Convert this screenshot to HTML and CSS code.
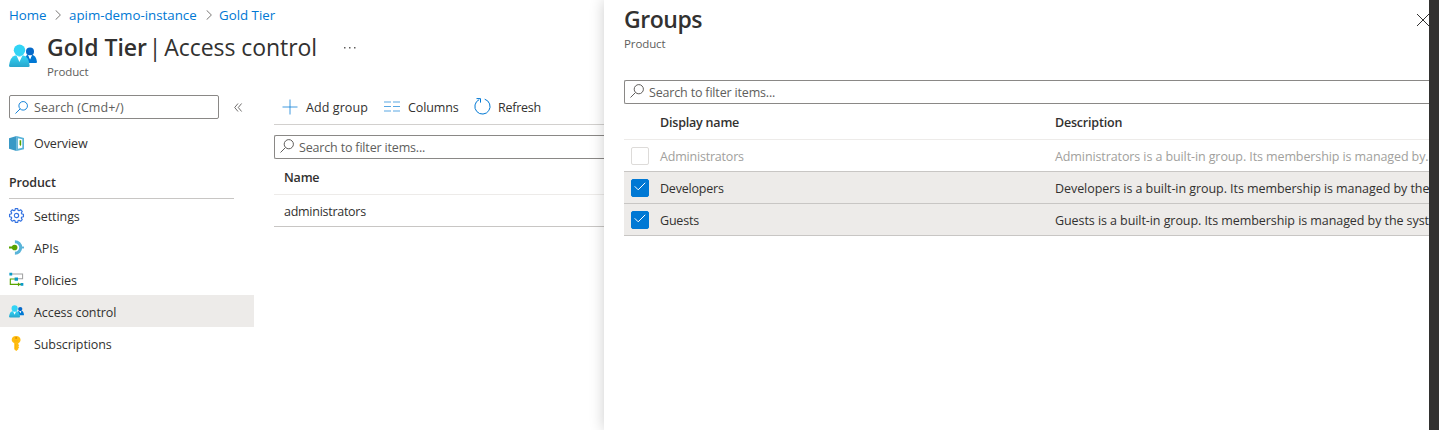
FILE: index.html
```html
<!DOCTYPE html>
<html lang="en">
<head>
<meta charset="utf-8">
<title>Gold Tier | Access control</title>
<link rel="stylesheet" href="styles.css">
</head>
<body>
<svg class="defs" width="0" height="0" aria-hidden="true">
  <defs>
    <linearGradient id="cyan" x1="0" y1="0" x2="0" y2="1"><stop offset="0" stop-color="#32d4f5"/><stop offset="1" stop-color="#28a5cc"/></linearGradient>
    <symbol id="people" viewBox="0 0 28 24">
      <circle cx="21" cy="7.400" r="4" fill="#0669c9"/>
      <path d="M16 19V15q.5-3.800 3-4.200l2 4 2-4q4 .5 5 7.200 0 1-1 1z" fill="#0078d4"/>
      <path d="M19.200 11l1.900 4.400L23 11q-2 1-3.800 0z" fill="#fff"/>
      <path d="M6 11.500q-4.500 1-6 10Q0 23 1.400 23H19.400q1.300 0 1.200-1.500-1-9-6-10z" fill="url(#cyan)"/>
      <path d="M7.500 11.500L10.400 18 13.500 11.500q-3 2-6 0z" fill="#fff"/>
      <circle cx="10.500" cy="6.200" r="5.700" fill="#32d4f5"/>
    </symbol>
    <symbol id="lens" viewBox="0 0 14 14"><circle cx="8.800" cy="5.200" r="4.600"/><path d="M5.500 8.500L.5 13.500"/></symbol>
    <symbol id="chev" viewBox="0 0 6 10"><path d="M.6.300L5.400 5 .6 9.700"/></symbol>
    <symbol id="tick" viewBox="0 0 12 9"><path d="M.7 4.300L4.200 7.800 11.200.8"/></symbol>
  </defs>
</svg>
<div class="portal">
  <div class="blade">
    <nav class="crumbs">
      <a class="home">Home</a><svg class="chev"><use href="#chev"/></svg><a class="instance">apim-demo-instance</a><svg class="chev"><use href="#chev"/></svg><a class="tier">Gold Tier</a>
    </nav>
    <header class="head">
      <svg class="head-icon"><use href="#people"/></svg>
      <div class="head-text">
        <h1><b>Gold Tier</b><i>|</i><span>Access control</span></h1>
        <div class="kind">Product</div>
      </div>
      <svg class="more" viewBox="0 0 12 2"><path d="M0 0h1.500v1.500H0zM5 0h1.500v1.500H5zM10 0h1.500v1.500H10z"/></svg>
    </header>
    <div class="body">
      <aside class="menu">
        <div class="search-row">
          <div class="search"><svg class="lens"><use href="#lens"/></svg><span class="s-menu">Search (Cmd+/)</span></div>
          <svg class="collapse" viewBox="0 0 8 9"><path d="M4 .5L.7 4.500 4 8.500M7.600.5L4.300 4.500l3.300 4"/></svg>
        </div>
        <div class="item overview">
          <svg viewBox="0 0 16 16"><path d="M8 0l8 2v12l-8 2z" fill="#59b4d9"/><path d="M9.500 2.500l4.700 1v9l-4.700 1z" fill="#fff"/><path d="M11.300 4.500H13v4.500l-.8 2-.9-2z" fill="#57a300"/><path d="M0 2.500L8 0v16l-8-2.500z" fill="#3999c6"/></svg>
          <span>Overview</span>
        </div>
        <h2>Product</h2>
        <div class="item">
          <svg viewBox="0 0 16 16" fill="none" stroke="#3573e2"><circle cx="8" cy="8" r="2.300" stroke-width="1.200"/><path stroke-width="1.250" stroke-linejoin="round" d="M6.700.6h2.600l.4 1.900 1 .4 1.700-1 1.700 1.700-1 1.700.4 1 1.900.4v2.600l-1.900.4-.4 1 1 1.700-1.700 1.700-1.700-1-1 .4-.4 1.900H6.700l-.4-1.900-1-.4-1.700 1-1.700-1.700 1-1.700-.4-1L.6 9.300V6.700l1.900-.4.4-1-1-1.700 1.700-1.700 1.700 1 1-.4z"/></svg>
          <span class="t-settings">Settings</span>
        </div>
        <div class="item">
          <svg viewBox="0 0 16 16"><path d="M6.300 1.800a6.200 6.200 0 0 1 0 12.400" stroke="#59b4d9" stroke-width="3.200" fill="none"/><path d="M13 7h3v2h-3z" fill="#59b4d9"/><path d="M0 6.900h4v2.200H0z" fill="#57a300"/><circle cx="6" cy="8" r="3" fill="#57a300"/></svg>
          <span>APIs</span>
        </div>
        <div class="item">
          <svg viewBox="0 0 16 16" fill="none"><path d="M2 2.200h12.500v5H8" stroke="#a0a1a2" stroke-width="1.100"/><path d="M8 7.500H1.400v5.700H13" stroke="#57a300" stroke-width="1.200"/><path d="M9.500 11l2.500 2.200-2.500 2.200z" fill="#57a300"/><path d="M.4.700h3v3h-3zM6 5.800h3.600v3.600H6zM12.300 11.700h3v3h-3z" fill="#0a9bc7"/></svg>
          <span>Policies</span>
        </div>
        <div class="item selected">
          <svg><use href="#people"/></svg>
          <span class="t-access">Access control</span>
        </div>
        <div class="item">
          <svg viewBox="0 0 16 16"><path d="M7.500 0c2.900 0 4.800 1.600 4.800 4.100 0 1.800-.9 3-2.400 3.700v1l1 1-1 1.100 1 1.100-1 1.100v1l-2.200 1.900-2.100-1.900V7.800C4 7 2.900 5.900 2.900 4.100 2.900 1.600 4.700 0 7.500 0z" fill="#ffbd10"/><circle cx="7.600" cy="2" r="1" fill="#d98a00"/><path d="M5.500 5.200h4.200M7 8.500v5" stroke="#f0a800" stroke-width=".5"/></svg>
          <span class="t-subs">Subscriptions</span>
        </div>
      </aside>
      <main class="content">
        <div class="toolbar">
          <svg class="i-add" viewBox="0 0 16 16"><path d="M8 .5v15M.5 8h15"/></svg><span class="t-add">Add group</span>
          <svg class="i-cols" viewBox="0 0 16 11"><path d="M0 1h7M9 1h7M0 5.500h7M9 5.500h7M0 10h7M9 10h7"/></svg><span class="t-cols">Columns</span>
          <svg class="i-ref" viewBox="0 0 17 17"><path d="M10.700 1.200A7.600 7.600 0 1 1 5.200 1.600M2.500.6h4v4"/></svg><span class="t-ref">Refresh</span>
        </div>
        <div class="filter"><svg class="lens"><use href="#lens"/></svg><span class="s-filter">Search to filter items...</span></div>
        <div class="col-head">Name</div>
        <div class="row"><span class="t-admins">administrators</span></div>
      </main>
    </div>
  </div>
  <section class="panel">
    <header class="panel-head">
      <div><h1>Groups</h1><div class="kind">Product</div></div>
      <svg class="close" viewBox="0 0 12 12"><path d="M0 0l12 12M12 0L0 12"/></svg>
    </header>
    <div class="filter"><svg class="lens"><use href="#lens"/></svg><span class="s-filter">Search to filter items...</span></div>
    <div class="grid">
      <div class="grow ghead"><span></span><span class="t-dn">Display name</span><span class="t-desc">Description</span></div>
      <div class="grow disabled"><i class="box"></i><span class="t-admin">Administrators</span><span class="long l1">Administrators is a built-in group. Its membership is managed by...</span></div>
      <div class="grow checked"><i class="box"><svg><use href="#tick"/></svg></i><span class="t-dev">Developers</span><span class="long l2">Developers is a built-in group. Its membership is managed by the</span></div>
      <div class="grow checked"><i class="box"><svg><use href="#tick"/></svg></i><span class="t-guests">Guests</span><span class="long l3">Guests is a built-in group. Its membership is managed by the syst</span></div>
    </div>
  </section>
  <div class="edge"></div>
</div>
</body>
</html>
```
FILE: styles.css
```css
* { box-sizing: border-box; }
body { margin: 0; background: #fff; color: #323130; font: 12.5px/18px "Open Sans", "Noto Sans", sans-serif; overflow: hidden; }
h1, h2 { margin: 0; }
svg { display: block; flex: none; overflow: visible; }
.defs { position: absolute; }
span, a, b { white-space: nowrap; }
.portal { display: flex; height: 430px; }
.blade { width: 604px; flex: none; overflow: hidden; }
.crumbs { display: flex; align-items: center; height: 30px; padding-left: 9px; color: #0078d4; font-size: 13.3px; }
.crumbs a { padding-bottom: 1px; }
.home { width: 37px; }
.instance { width: 128px; }
.chev { width: 6px; height: 10px; margin: 0 8px 0 9px; fill: none; stroke: #797775; stroke-width: 1; }
.instance + .chev { margin-right: 7px; }
.head { display: flex; height: 65px; padding-left: 9px; }
.head-icon { width: 28px; height: 24px; margin-top: 14px; }
.head-text { width: 270px; margin-left: 10px; }
.head h1 { display: flex; height: 34px; font-size: 23px; line-height: 35px; font-weight: 400; }
.head h1 b { width: 99px; font-weight: 600; }
.head h1 i { width: 19px; text-align: center; font-style: normal; }
.head h1 span { letter-spacing: -.06px; }
.kind { font-size: 11.5px; line-height: 16px; letter-spacing: -.1px; color: #605e5c; }
.more { width: 12px; height: 2px; margin: 17px 0 0 27px; fill: #605e5c; }
.body { display: flex; }
.menu { width: 254px; flex: none; }
.search-row { display: flex; align-items: center; height: 24px; padding-left: 9px; gap: 15px; }
.search { display: flex; align-items: center; width: 210px; height: 24px; padding-left: 5px; border: 1px solid #8a8886; border-radius: 2px; color: #605e5c; }
.s-menu { padding-top: 1px; letter-spacing: .05px; }
.lens { width: 13px; height: 13px; fill: none; stroke: #605e5c; }
.search .lens { margin-right: 6px; stroke: #0078d4; }
.collapse { width: 8px; height: 9px; fill: none; stroke: #605e5c; stroke-width: .9; }
.item { display: flex; align-items: center; height: 32px; padding-left: 9px; gap: 10px; letter-spacing: -.08px; }
.item svg { width: 15px; height: 15px; }
.item span { padding-top: 3px; }
.overview { margin-top: 8px; }
.overview span { padding-top: 1px; }
.selected { background: #edebe9; }
.menu h2 { width: 225px; height: 32px; margin: 8px 0 0 9px; border-bottom: 1px solid #c8c6c4; font-size: 12.5px; line-height: 32px; font-weight: 600; letter-spacing: -.12px; }
.content { width: 330px; flex: none; margin-left: 20px; }
.toolbar { display: flex; align-items: center; height: 30px; padding: 0 0 6px 8px; border-bottom: 1px solid #d2d0ce; }
.toolbar svg { fill: none; stroke: #0078d4; }
.toolbar span { padding-top: 2px; }
.i-add { width: 16px; height: 16px; margin-right: 8px; opacity: .75; }
.t-add { width: 62px; letter-spacing: .08px; }
.i-cols { width: 16px; height: 11px; margin: 0 8px 0 16px; opacity: .65; }
.t-cols { width: 50px; letter-spacing: -.1px; }
.i-ref { width: 17px; height: 17px; margin: 0 7px 0 16px; }
.t-ref { letter-spacing: -.25px; }
.filter { display: flex; align-items: center; height: 24px; padding-left: 5px; border: 1px solid #8a8886; border-right: 0; border-radius: 2px 0 0 2px; color: #605e5c; }
.filter .lens { width: 14px; height: 14px; margin: -2px 5px 0 0; }
.s-filter { padding-top: 1px; letter-spacing: -.17px; }
.content .filter { margin-top: 10px; }
.col-head { height: 36px; padding-left: 10px; line-height: 38px; font-weight: 600; letter-spacing: -.2px; border-bottom: 1px solid #edebe9; }
.row { height: 32px; padding-left: 10px; line-height: 34px; letter-spacing: -.27px; border-bottom: 1px solid #c8c6c4; }
.panel { position: relative; width: 825px; flex: none; padding-left: 20px; background: #fff; box-shadow: 0 0 14px rgba(0,0,0,.2); clip-path: inset(0 0 0 -20px); }
.panel-head { display: flex; justify-content: space-between; height: 80px; }
.panel-head h1 { height: 36px; font-size: 23px; line-height: 39px; font-weight: 600; letter-spacing: -.45px; }
.close { width: 12px; height: 12px; margin: 14px 0 0; fill: none; stroke: #323130; }
.grow { display: grid; grid-template-columns: 36px 395px 1fr; align-items: center; height: 32px; border-bottom: 1px solid #c8c6c4; }
.grow span { padding-top: 2px; letter-spacing: -.2px; }
.ghead { height: 36px; font-weight: 600; border-color: #edebe9; }
.grow .long { min-width: 0; letter-spacing: -.06px; }
.grow .l1 { letter-spacing: -.1px; }
.grow .l3 { letter-spacing: -.07px; }
.checked { background: #edebe9; }
.disabled { color: #a19f9d; }
.box { display: flex; align-items: center; justify-content: center; width: 18px; height: 18px; margin-left: 7px; border: 1px solid #dddbd9; border-radius: 2px; }
.checked .box { background: #0078d4; border-color: #0078d4; }
.box svg { width: 12px; height: 9px; margin-top: -2px; fill: none; stroke: #fff; }
.edge { width: 10px; flex: none; background: #323130; position: relative; }
```
